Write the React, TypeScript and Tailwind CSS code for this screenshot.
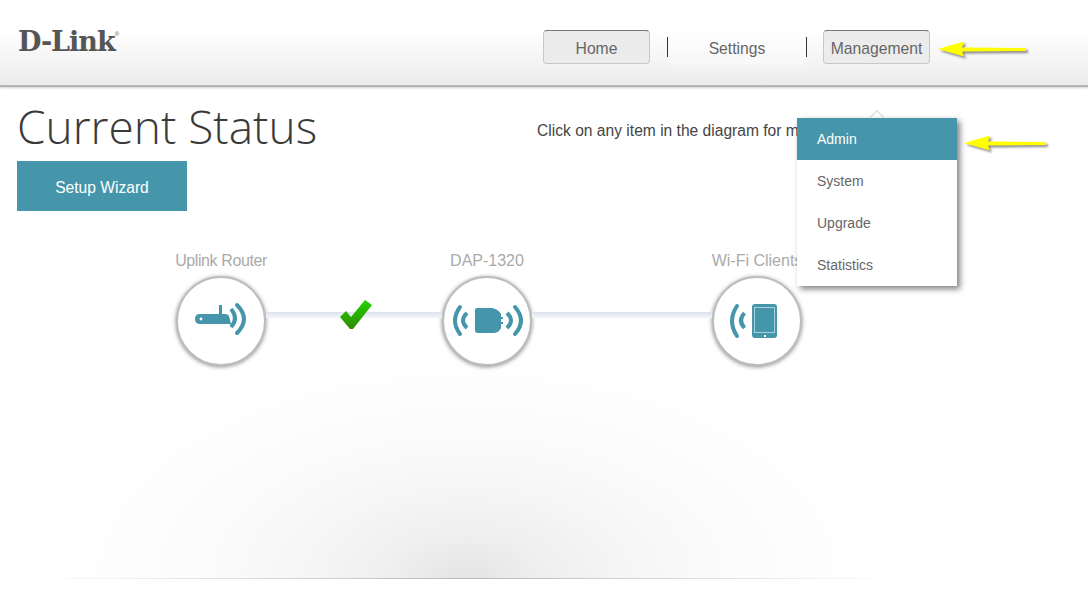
import React, { FC } from "react";

const NavTab: FC<{ label: string; active?: boolean; width: string }> = ({ label, active, width }) => (
  <div
    className={`h-[34px] ${width} pt-[3px] flex items-center justify-center text-[15.7px] text-[#666] rounded-[4px] ${
      active
        ? "bg-[#ececec] border border-[#c8c8c8] border-t-[#777]"
        : "bg-white/40 shadow-[0_4px_6px_rgba(255,255,255,0.3)]"
    }`}
  >
    {label}
  </div>
);

const Divider: FC = () => <div className="relative w-px h-5 bg-[#333]" />;

const YellowArrow: FC<{ className: string; tail: number }> = ({ className, tail }) => (
  <svg className={`${className} drop-shadow-[2px_2px_1px_rgba(0,0,0,0.45)]`} width="100" height="24" viewBox="0 0 100 24">
    <path d={`M2 11 L28 3.5 L26 9.5 L${tail} 10 L${tail} 13 L26 13.5 L28 18.5 Z`} fill="#ffff00" />
  </svg>
);

const RouterIcon: FC = () => (
  <svg width="90" height="90" viewBox="0 0 90 90" fill="none">
    <rect x="43" y="29" width="3" height="10" fill="#4596aa" />
    <path d="M24 38 H49 Q52 38 53 40 L55 48 H24 Q19 48 19 43 Q19 38 24 38 Z" fill="#4596aa" />
    <circle cx="25" cy="43" r="1.4" fill="#fff" />
    <path d="M55 33 Q63 42 55 51" stroke="#4596aa" strokeWidth="4" />
    <path d="M61 29 Q75 43 61 57" stroke="#4596aa" strokeWidth="4" strokeLinecap="round" />
  </svg>
);

const ExtenderIcon: FC = () => (
  <svg width="90" height="90" viewBox="0 0 90 90" fill="none">
    <path d="M35 32 H50 Q56 33 59 38 V41 H61 V43 H59 V46 H61 V48 H59 V52 Q57 57 51 57 H36 Q33 57 33 54 V34 Q33 32 35 32 Z" fill="#4596aa" />
    <path d="M25 37 Q17 44.5 25 52" stroke="#4596aa" strokeWidth="4" />
    <path d="M18 31 Q8 44.5 18 58" stroke="#4596aa" strokeWidth="4" strokeLinecap="round" />
    <path d="M65 37 Q73 44.5 65 52" stroke="#4596aa" strokeWidth="4" />
    <path d="M73 31 Q85 44.5 73 58" stroke="#4596aa" strokeWidth="4" strokeLinecap="round" />
  </svg>
);

const TabletIcon: FC = () => (
  <svg width="90" height="90" viewBox="0 0 90 90" fill="none">
    <rect x="40" y="28" width="25" height="34" rx="3" fill="#4596aa" />
    <rect x="42.5" y="31.5" width="20" height="25" fill="#4596aa" stroke="#a8d0da" strokeWidth="1" />
    <rect x="52" y="59" width="2" height="2" fill="#fff" />
    <path d="M32.5 37 Q25.5 44.5 32.5 52" stroke="#4596aa" strokeWidth="4" />
    <path d="M25 30 Q15 45 25 60" stroke="#4596aa" strokeWidth="4" strokeLinecap="round" />
  </svg>
);

const Node: FC<{ label: string; labelClass?: string; children: React.ReactNode }> = ({ label, labelClass, children }) => (
  <div className="w-[90px] flex flex-col items-center shrink-0">
    <div className={`h-[30px] flex items-center text-base text-[#aaa] whitespace-nowrap ${labelClass ?? ""}`}>{label}</div>
    <div className="w-[90px] h-[90px] rounded-full bg-white border-2 border-[#bdbdbd] shadow-[0_1px_4px_rgba(0,0,0,0.45)] flex items-center justify-center">
      <div className="shrink-0">{children}</div>
    </div>
  </div>
);

const Connector: FC<{ width: string; check?: boolean }> = ({ width, check }) => (
  <div className={`${width} shrink-0 h-[90px] mt-[30px] relative`}>
    <div className="mt-[36px] h-[6px] bg-gradient-to-b from-[#dde2ec] to-[#f3f5f9]" />
    {check && (
      <svg className="absolute left-[73px] top-[23px]" width="34" height="32" viewBox="0 0 34 32">
        <defs>
          <linearGradient id="tick" x1="0" y1="0" x2="0" y2="1">
            <stop offset="0" stopColor="#22d400" />
            <stop offset="1" stopColor="#2f8a00" />
          </linearGradient>
        </defs>
        <path d="M1 18 L7 12 L12 18 L26 1 L33 6 L14 30 L11 30 Z" fill="url(#tick)" />
      </svg>
    )}
  </div>
);

const App: FC = () => {
  return (
    <div className="relative w-[1088px] h-[594px] overflow-hidden bg-white font-['Liberation_Sans',Arial,sans-serif]">
      <div className="absolute left-[32px] top-[338px] w-[870px] h-[240px] bg-[radial-gradient(ellipse_435px_240px_at_50%_100%,#e4e4e4_0%,#efefef_18%,#f6f6f6_38%,#fbfbfb_60%,#fefefe_85%,#ffffff_100%)]" />
      <div className="absolute left-[32px] top-[578px] w-[870px] h-px bg-gradient-to-r from-transparent via-[#b8b8b8] to-transparent" />

      <header className="relative h-[87px] bg-gradient-to-b from-white from-35% to-[#ececec] border-b-[2px] border-[#b4b4b4] shadow-[0_1px_2px_rgba(0,0,0,0.2)] flex items-start">
        <div className="ml-[18px] mt-[25px] flex items-start font-['DejaVu_Serif',serif] font-bold text-[#555] text-[27px] leading-[34px] tracking-[-1px]">
          D-Link
          <span className="text-[6px] leading-[18px] tracking-normal font-['Liberation_Sans',sans-serif] font-normal">®</span>
        </div>
        <nav className="absolute left-[543px] top-[30px] flex items-center">
          <NavTab label="Home" active width="w-[107px]" />
          <div className="ml-[17px]"><Divider /></div>
          <NavTab label="Settings" width="w-[138px]" />
          <Divider />
          <div className="ml-[16px]"><NavTab label="Management" active width="w-[107px]" /></div>
        </nav>
      </header>

      <main className="relative">
        <div className="flex items-start">
          <h1 className="ml-[17px] mt-[8px] h-[64px] text-[46px] leading-[62px] font-light text-[#3a3a3a] font-['Open_Sans',sans-serif] whitespace-nowrap">
            Current Status
          </h1>
          <p className="ml-[220px] mt-[34px] text-[15.6px] leading-5 text-[#444] whitespace-nowrap">
            Click on any item in the diagram for m
          </p>
        </div>
        <button className="block ml-[17px] mt-[2px] pt-[4px] w-[170px] h-[50px] bg-[#4596aa] text-white text-[15.6px]">
          Setup Wizard
        </button>
        <div className="flex ml-[176px] mt-[35px]">
          <Node label="Uplink Router" labelClass="tracking-[-0.4px]"><RouterIcon /></Node>
          <Connector width="w-[176px]" check />
          <Node label="DAP-1320"><ExtenderIcon /></Node>
          <Connector width="w-[180px]" />
          <Node label="Wi-Fi Clients"><TabletIcon /></Node>
        </div>
      </main>

      <div className="absolute left-[872px] top-[112px] w-[10px] h-[10px] rotate-45 bg-white border-l border-t border-[#d8d8d8]" />
      <ul className="absolute left-[797px] top-[118px] w-[160px] bg-white shadow-[3px_3px_6px_rgba(0,0,0,0.5)] text-sm text-[#666]">
        <li className="h-[42px] pl-5 flex items-center bg-[#4596aa] text-white">Admin</li>
        <li className="h-[42px] pl-5 flex items-center">System</li>
        <li className="h-[42px] pl-5 flex items-center">Upgrade</li>
        <li className="h-[42px] pl-5 flex items-center">Statistics</li>
      </ul>

      <YellowArrow className="absolute left-[936px] top-[38px]" tail={90} />
      <YellowArrow className="absolute left-[962px] top-[132px]" tail={84} />
    </div>
  );
};

export default App;
